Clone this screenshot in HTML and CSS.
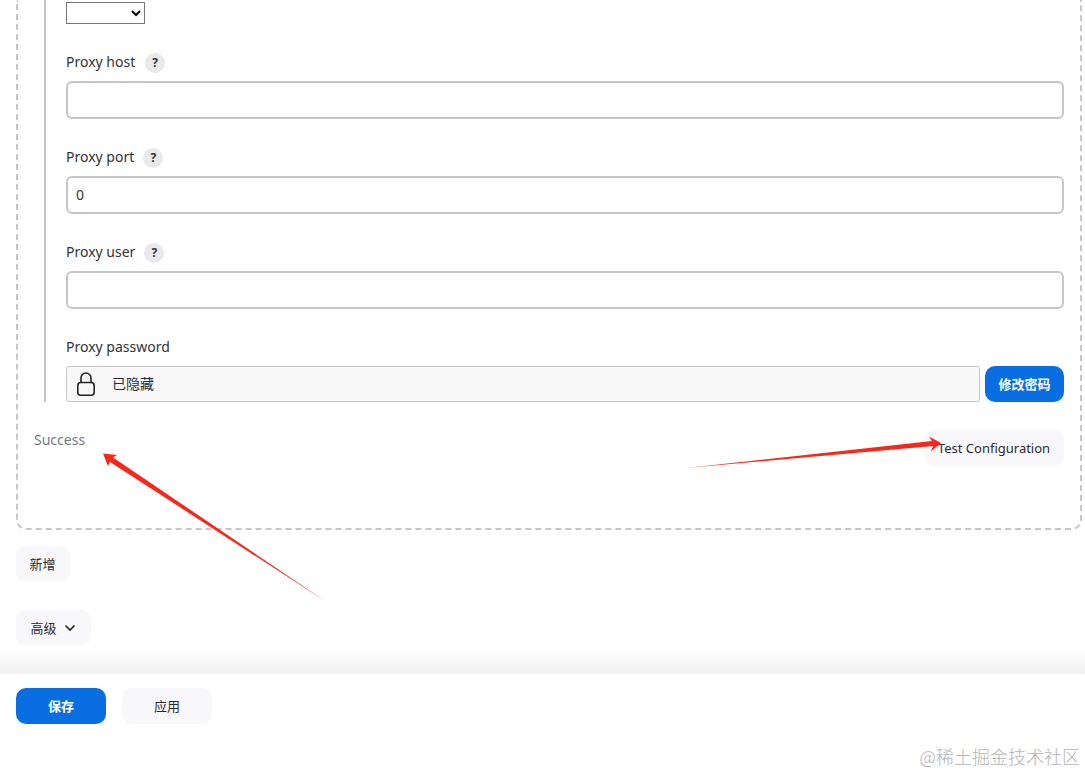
FILE: index.html
```html
<!DOCTYPE html>
<html lang="zh">
<head>
<meta charset="utf-8">
<title>Proxy configuration</title>
<link rel="stylesheet" href="styles.css">
</head>
<body>
<main class="content">
  <section class="box">
    <div class="nested">
      <div class="select-row">
        <select class="select"><option></option></select>
      </div>
      <div class="field">
        <div class="label">Proxy host<span class="help help-a">?</span></div>
        <input class="input" type="text" value="">
      </div>
      <div class="field">
        <div class="label">Proxy port<span class="help">?</span></div>
        <input class="input" type="text" value="0">
      </div>
      <div class="field">
        <div class="label">Proxy user<span class="help">?</span></div>
        <input class="input" type="text" value="">
      </div>
      <div class="field field-last">
        <div class="label">Proxy password</div>
        <div class="secret-row">
          <div class="secret">
            <svg class="lock" width="18" height="24" viewBox="0 0 18 24" fill="none" stroke="#222" stroke-width="1.6">
              <path d="M4 10.5V6a5 5 0 0 1 10 0v4.5"/>
              <rect x="0.8" y="10.5" width="16.4" height="12.7" rx="3"/>
            </svg>
            <span class="secret-text">已隐藏</span>
          </div>
          <button class="btn btn-primary btn-cjk btn-change">修改密码</button>
        </div>
      </div>
    </div>
    <div class="test-row">
      <span class="success">Success</span>
      <button class="btn btn-light btn-test">Test Configuration</button>
    </div>
  </section>
  <button class="btn btn-light btn-cjk btn-add">新增</button>
  <button class="btn btn-light btn-cjk btn-adv">高级
    <svg class="chev" width="12" height="8" viewBox="0 0 12 8" fill="none" stroke="#222" stroke-width="1.6"><path d="M1.5 1.5 6 6l4.5-4.5"/></svg>
  </button>
</main>
<div class="fade"></div>
<footer class="bar">
  <button class="btn btn-primary btn-cjk btn-save">保存</button>
  <button class="btn btn-light btn-cjk btn-apply">应用</button>
</footer>
<svg class="arrows" width="1085" height="775" viewBox="0 0 1085 775">
  <polygon fill="#f9261a" points="325,601 113,457.5 117,455 103,453.5 108,466 110,462"/>
  <polygon fill="#f9261a" points="686,468 932,441 929,436.5 941,443 931,451.5 933,446"/>
</svg>
<div class="watermark">@稀土掘金技术社区</div>
</body>
</html>
```
FILE: styles.css
```css
* { box-sizing: border-box; }
html, body { margin: 0; height: 775px; overflow: hidden; background: #fff; }
body {
  position: relative;
  font-family: "Noto Sans", "Noto Sans CJK SC", sans-serif;
  font-size: 14px;
  color: #2b2b30;
}
.content { padding: 0 3px 0 16px; }
.box {
  height: 530px;
  border: 2px dashed #c6c6c9;
  border-top: none;
  border-radius: 0 0 10px 10px;
  padding-right: 16px;
}
.nested {
  margin-left: 26px;
  border-left: 2px solid #c4c4c6;
  padding-left: 20px;
  height: 402px;
}
.select-row { height: 24px; padding-top: 2px; }
.select {
  display: block;
  width: 79px;
  height: 22px;
  background: #fff;
  border: 1px solid #767676;
  border-radius: 0;
  font-size: 13px;
}
.field { height: 95px; padding-top: 25px; }
.label {
  display: flex;
  align-items: center;
  height: 26px;
  line-height: 26px;
  margin-bottom: 6px;
  font-size: 14px;
  color: #333338;
}
.help {
  display: flex;
  align-items: center;
  justify-content: center;
  width: 20px;
  height: 20px;
  margin-top: 2px;
  margin-left: 9px;
  border-radius: 50%;
  background: #e9e9eb;
  font-size: 12px;
  font-weight: 700;
  color: #333;
}
.help-a { margin-left: 10px; }
.input {
  display: block;
  width: 998px;
  height: 38px;
  padding: 0 8px 2px;
  border: 2px solid #c6c6c9;
  border-radius: 6px;
  background: #fff;
  font: inherit;
  color: #333338;
  outline: none;
}
.field-last { height: auto; }
.secret-row { display: flex; gap: 5px; }
.secret {
  display: flex;
  align-items: center;
  width: 914px;
  height: 36px;
  padding-left: 10px;
  border: 1px solid #c6c6c9;
  border-radius: 3px;
  background: #f8f8f9;
  font-size: 14px;
}
.lock { margin-right: 17px; }
.secret-text { padding-bottom: 3px; }
.btn {
  display: inline-flex;
  align-items: center;
  justify-content: center;
  height: 36px;
  border: none;
  border-radius: 10px;
  font-family: inherit;
  font-size: 13px;
  padding: 0;
}
.btn-cjk { padding-bottom: 2px; }
.btn-primary { background: #0a6ee3; color: #fff; font-weight: 700; }
.btn-light { background: #f8f8fb; color: #2b2b30; }
.btn-change { width: 79px; }
.test-row {
  display: flex;
  justify-content: space-between;
  align-items: flex-start;
  margin-top: 28px;
  padding-left: 16px;
}
.success { color: #77777d; font-size: 14px; line-height: 20px; }
.btn-test { width: 140px; font-size: 13px; }
.btn-add { display: flex; width: 54px; margin-top: 16px; padding-right: 1px; }
.btn-adv { display: flex; width: 75px; margin-top: 28px; gap: 7px; padding-right: 1px; }
.chev { margin-top: 2px; }
.fade {
  position: absolute;
  left: 0;
  right: 0;
  top: 648px;
  height: 26px;
  background: linear-gradient(to bottom, rgba(240,240,241,0), #f1f1f2);
}
.bar {
  position: absolute;
  left: 0;
  right: 0;
  top: 674px;
  bottom: 0;
  display: flex;
  align-items: flex-start;
  gap: 16px;
  padding: 14px 16px 0;
  background: #fff;
}
.btn-save, .btn-apply { width: 90px; }
.arrows { position: absolute; left: 0; top: 0; pointer-events: none; }
.watermark {
  position: absolute;
  right: 5px;
  top: 744px;
  font-family: "Noto Sans CJK SC", sans-serif;
  font-size: 18px;
  line-height: 24px;
  color: #b4b4b4;
  font-weight: 300;
}
```
